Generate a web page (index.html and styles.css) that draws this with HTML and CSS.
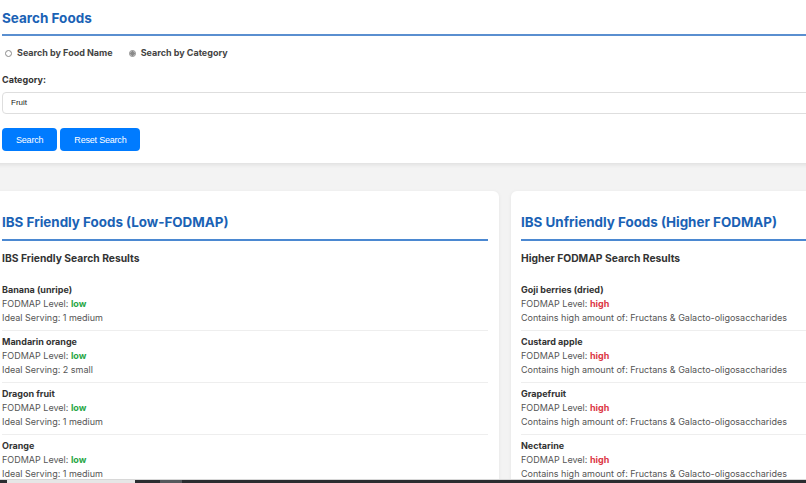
FILE: index.html
```html
<!DOCTYPE html>
<html lang="en">
<head>
    <meta charset="UTF-8">
    <meta name="viewport" content="width=device-width, initial-scale=1.0">
    <title>IBS Food Finder</title>
    <link rel="stylesheet" href="styles.css">
</head>
<body>
    <div class="page">
        <section class="search-section">
            <h2>Search Foods</h2>

            <div class="search-type">
                <label><input type="radio" name="search-type" value="name"> Search by Food Name</label>
                <label><input type="radio" name="search-type" value="category" checked> Search by Category</label>
            </div>

            <label class="field-label" for="category">Category:</label>
            <div class="category-box" id="category">Fruit</div>

            <div class="buttons">
                <button type="button">Search</button>
                <button type="button">Reset Search</button>
            </div>
        </section>

        <div class="results">
            <div class="card">
                <h3>IBS Friendly Foods (Low-FODMAP)</h3>
                <h4>IBS Friendly Search Results</h4>
                <ul class="food-list">
                    <li>
                        <strong>Banana (unripe)</strong>
                        <span>FODMAP Level: <b class="low">low</b></span>
                        <span>Ideal Serving: 1 medium</span>
                    </li>
                    <li>
                        <strong>Mandarin orange</strong>
                        <span>FODMAP Level: <b class="low">low</b></span>
                        <span>Ideal Serving: 2 small</span>
                    </li>
                    <li>
                        <strong>Dragon fruit</strong>
                        <span>FODMAP Level: <b class="low">low</b></span>
                        <span>Ideal Serving: 1 medium</span>
                    </li>
                    <li>
                        <strong>Orange</strong>
                        <span>FODMAP Level: <b class="low">low</b></span>
                        <span>Ideal Serving: 1 medium</span>
                    </li>
                    <li>
                        <strong>Kiwi fruit</strong>
                        <span>FODMAP Level: <b class="low">low</b></span>
                        <span>Ideal Serving: 2 small</span>
                    </li>
                </ul>
            </div>

            <div class="card">
                <h3>IBS Unfriendly Foods (Higher FODMAP)</h3>
                <h4>Higher FODMAP Search Results</h4>
                <ul class="food-list">
                    <li>
                        <strong>Goji berries (dried)</strong>
                        <span>FODMAP Level: <b class="high">high</b></span>
                        <span>Contains high amount of: Fructans &amp; Galacto-oligosaccharides</span>
                    </li>
                    <li>
                        <strong>Custard apple</strong>
                        <span>FODMAP Level: <b class="high">high</b></span>
                        <span>Contains high amount of: Fructans &amp; Galacto-oligosaccharides</span>
                    </li>
                    <li>
                        <strong>Grapefruit</strong>
                        <span>FODMAP Level: <b class="high">high</b></span>
                        <span>Contains high amount of: Fructans &amp; Galacto-oligosaccharides</span>
                    </li>
                    <li>
                        <strong>Nectarine</strong>
                        <span>FODMAP Level: <b class="high">high</b></span>
                        <span>Contains high amount of: Fructans &amp; Galacto-oligosaccharides</span>
                    </li>
                    <li>
                        <strong>Pomegranate</strong>
                        <span>FODMAP Level: <b class="high">high</b></span>
                        <span>Contains high amount of: Fructans &amp; Galacto-oligosaccharides</span>
                    </li>
                </ul>
            </div>
        </div>
    </div>

    <div class="bottom-bar"><span class="thumb"></span><span class="thumb-light"></span></div>
</body>
</html>
```

FILE: styles.css
```css
body {
    font-family: 'Inter', 'Liberation Sans', sans-serif;
    background-color: #f3f3f3;
    color: #333;
    margin: 0;
    padding: 0;
    overflow: hidden;
}

.page {
    width: 1026px;
    margin-left: -8px;
}

.search-section {
    background-color: #ffffff;
    padding: 7px 0 12px 10px;
    box-shadow: 0 2px 4px rgba(0, 0, 0, 0.08);
}

.search-section h2 {
    font-size: 13.5px;
    line-height: 22px;
    font-weight: 700;
    color: #1a62b5;
    margin: 0;
    padding-bottom: 5px;
    border-bottom: 2px solid #5a8fd0;
}

.search-type {
    display: flex;
    gap: 13px;
    margin-top: 11px;
    font-size: 9px;
    line-height: 12px;
    font-weight: 700;
    color: #444;
}

.search-type label {
    display: flex;
    align-items: center;
    gap: 5px;
}

.search-type input {
    appearance: none;
    width: 7px;
    height: 7px;
    margin: 0 0 0 3px;
    border: 1px solid #8a8a8a;
    border-radius: 50%;
    background: #fff;
}

.search-type input:checked {
    background: radial-gradient(circle, #8a8a8a 0 2px, #fff 2.5px);
}

.field-label {
    display: block;
    margin-top: 15px;
    font-size: 9px;
    line-height: 12px;
    font-weight: 700;
    color: #333;
}

.category-box {
    margin-top: 6px;
    height: 20px;
    line-height: 20px;
    padding-left: 8px;
    border: 1px solid #dedede;
    border-radius: 4px;
    font-family: 'Liberation Sans', Arial, sans-serif;
    font-size: 8px;
    color: #222;
}

.buttons {
    display: flex;
    gap: 3px;
    margin-top: 14px;
}

.buttons button {
    background-color: #007bff;
    color: white;
    border: none;
    height: 23px;
    padding: 0 14px;
    border-radius: 4px;
    font-family: 'Liberation Sans', Arial, sans-serif;
    font-size: 9px;
    letter-spacing: -0.2px;
    cursor: pointer;
}

.results {
    display: flex;
    gap: 12px;
    margin-top: 28px;
}

.card {
    flex: 0 0 507px;
    box-sizing: border-box;
    background-color: #ffffff;
    border-radius: 6px;
    padding: 12px 11px 20px 10px;
    box-shadow: 0 1px 4px rgba(0, 0, 0, 0.06);
}

.card h3 {
    font-size: 13.4px;
    line-height: 17px;
    font-weight: 700;
    color: #1a62b5;
    margin: 11px 0 0;
    padding-bottom: 8px;
    border-bottom: 2px solid #4b88d1;
}

.card h4 {
    font-size: 10.3px;
    line-height: 13px;
    font-weight: 700;
    color: #333;
    margin: 11px 0 0;
}

.food-list {
    list-style-type: none;
    margin: 13px 0 0;
    padding: 0;
}

.food-list li {
    display: flex;
    flex-direction: column;
    padding: 5px 0 5px;
    border-bottom: 1px solid #eeeeee;
    font-size: 9px;
    line-height: 14px;
    color: #555;
}

.food-list li + li {
    padding-top: 4px;
}

.food-list strong {
    color: #333;
}

.low {
    color: #28a745;
}

.high {
    color: #dc3545;
}

.bottom-bar {
    position: fixed;
    left: 0;
    right: 0;
    bottom: 0;
    height: 3px;
    background-color: #2a2d30;
    border-top: 1px solid #d8d8d8;
}

.bottom-bar .thumb {
    position: absolute;
    left: 7px;
    top: 0;
    width: 128px;
    height: 3px;
    background-color: #e6e6e6;
}

.bottom-bar .thumb-light {
    position: absolute;
    left: 160px;
    top: 0;
    width: 22px;
    height: 3px;
    background-color: #55595d;
}
```
